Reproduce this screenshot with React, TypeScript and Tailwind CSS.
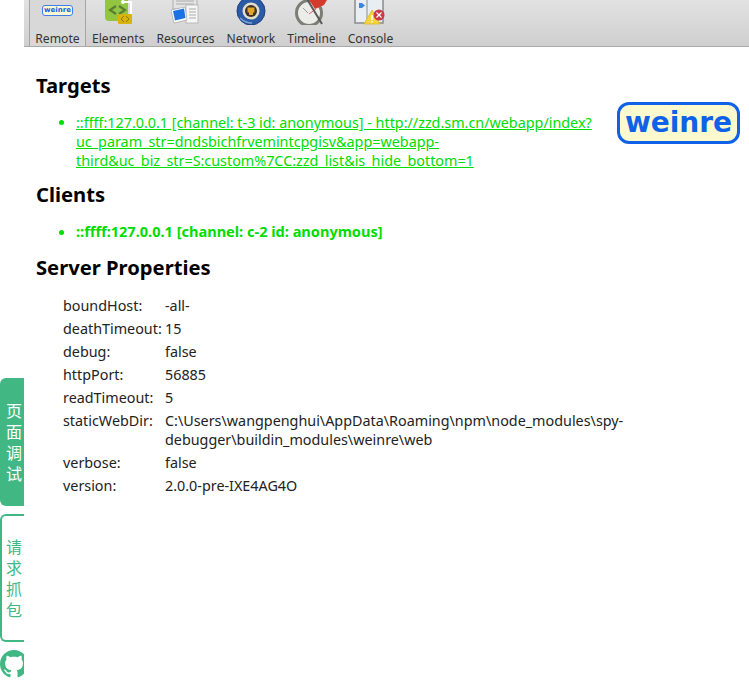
import React from 'react';

const font = { fontFamily: '"Noto Sans", "Noto Sans CJK SC", sans-serif' };
const logoFont = { fontFamily: '"DejaVu Sans", sans-serif' };

function ElementsIcon() {
  return (
    <svg width="28" height="25" viewBox="-1 0 28 25">
      <path d="M0 -3h23v20q0 4-4 4H4q-4 0-4-4z" fill="#93c640" />
      <path d="M11 6 5 10l6 4M14 6l6 4-6 4" stroke="#5c7d34" strokeWidth="2.200" fill="none" />
      <path d="M18 2h8v13" stroke="#fff" strokeWidth="2" fill="none" />
      <circle cx="18" cy="2" r="2" fill="#fff" />
      <rect x="13" y="14" width="14" height="10" rx="1" fill="#d6b30e" />
      <path d="M19 16l-3 3 3 3M21 16l3 3-3 3" stroke="#8f7708" strokeWidth="1" fill="none" />
    </svg>
  );
}

function ResourcesIcon() {
  return (
    <svg width="28" height="25" viewBox="0 0 28 25">
      <rect x="2" y="-3" width="24" height="12" fill="#e4e4e4" stroke="#9a9a9a" strokeWidth="0.700" />
      <path d="M5 1h18M5 4h18" stroke="#aaa" strokeWidth="1" />
      <rect x="15" y="5" width="12" height="18" fill="#f6f6f6" stroke="#a8a8a8" strokeWidth="0.700" />
      <path d="M18 9h7M18 12h7M18 15h7M18 18h7" stroke="#aaa" strokeWidth="1" />
      <path d="M0 10 14 7l2 13-13 3z" fill="#fff" stroke="#888" strokeWidth="0.500" />
      <path d="M2 11l11-2.500 1.500 9.500L4 20.500z" fill="#1a72e4" />
    </svg>
  );
}

function NetworkIcon() {
  return (
    <svg width="30" height="26" viewBox="0 0 30 26">
      <circle cx="15" cy="11" r="14" fill="#2c5ba6" stroke="#1c3d84" strokeWidth="1" />
      <path d="M4 18q5 5 12 5" stroke="#7fa2d6" strokeWidth="1.500" fill="none" />
      <circle cx="15" cy="11" r="8.500" fill="#e3decb" />
      <circle cx="15" cy="11" r="6" fill="#3a3122" />
      <rect x="11.500" y="7.500" width="7" height="5" fill="#e2a62a" />
      <rect x="13" y="12" width="4" height="3" fill="#e2a62a" />
    </svg>
  );
}

function TimelineIcon() {
  return (
    <svg width="34" height="26" viewBox="0 0 34 26">
      <circle cx="15" cy="13" r="12.500" fill="#ecece8" stroke="#7d7d76" strokeWidth="3" />
      <path d="M15 14l7-5" stroke="#e0646c" strokeWidth="1" />
      <path d="M9 8l5 5" stroke="#999" strokeWidth="1" />
      <path d="M13 -1l15 25" stroke="#5a5a5a" strokeWidth="2" />
      <path d="M15 0h18l-3 5-9 4z" fill="#d43a2b" />
    </svg>
  );
}

function ConsoleIcon() {
  return (
    <svg width="32" height="25" viewBox="0 0 32 25">
      <rect x="1" y="-2" width="28" height="25" fill="#e9eef2" stroke="#8b8b8b" strokeWidth="1.500" />
      <path d="M5 3h3l3 2.500-3 2.500H5z" fill="#3f85dc" />
      <path d="M13 -2v25" stroke="#8b8b8b" strokeWidth="1" />
      <path d="M18 10l8 14H10z" fill="#f5d43b" stroke="#dcb72a" strokeWidth="0.800" />
      <path d="M18 15v5M18 21v1.500" stroke="#fff" strokeWidth="1.500" />
      <circle cx="25" cy="15" r="5.500" fill="#c8394a" />
      <path d="M22.500 12.500l5 5M27.500 12.500l-5 5" stroke="#fff" strokeWidth="1.200" />
    </svg>
  );
}

function WeinreBadge({ small }: { small?: boolean }) {
  if (small) {
    return (
      <div
        className="flex items-center justify-center w-[31px] h-[11px] rounded-[3px] border border-[#3d7df0] bg-[#fdf8cf] text-[#1160e6] text-[7px] font-bold leading-none"
        style={logoFont}
      >
        weinre
      </div>
    );
  }
  return (
    <div
      className="flex items-center justify-center w-[123px] h-[42px] rounded-[12px] border-[3px] border-[#0f62e8] bg-[#fdf9cf] text-[#0f62e8] text-[28px] font-bold leading-none"
      style={logoFont}
    >
      weinre
    </div>
  );
}

const tabs = [
  { label: 'Elements', icon: <ElementsIcon /> },
  { label: 'Resources', icon: <ResourcesIcon /> },
  { label: 'Network', icon: <NetworkIcon /> },
  { label: 'Timeline', icon: <TimelineIcon /> },
  { label: 'Console', icon: <ConsoleIcon /> },
];

const props = [
  ['boundHost:', '-all-'],
  ['deathTimeout:', '15'],
  ['debug:', 'false'],
  ['httpPort:', '56885'],
  ['readTimeout:', '5'],
  ['staticWebDir:', 'C:\\Users\\wangpenghui\\AppData\\Roaming\\npm\\node_modules\\spy-debugger\\buildin_modules\\weinre\\web'],
  ['verbose:', 'false'],
  ['version:', '2.0.0-pre-IXE4AG4O'],
];

function Toolbar() {
  return (
    <div className="flex h-[47px] ml-[24px] pl-[5px] border-b border-[#a9a9a9] bg-gradient-to-b from-[#e2e2e2] to-[#cfcfcf] overflow-hidden">
      <div className="flex flex-col items-center w-[57px] border-x border-[#a5a5a5] bg-[#d8d8d8]">
        <div className="h-[31px] pt-[5px]">
          <WeinreBadge small />
        </div>
        <span className="text-[12.200px] leading-[15px] text-[#333]">Remote</span>
      </div>
      <div className="flex gap-[12px] ml-[6px]">
        {tabs.map((t) => (
          <div key={t.label} className="flex flex-col items-center">
            <div className="h-[31px] w-[10px] flex justify-center">
              <div className="shrink-0 h-[25px] overflow-hidden">{t.icon}</div>
            </div>
            <span className="text-[12.100px] leading-[15px] text-[#333]">{t.label}</span>
          </div>
        ))}
      </div>
    </div>
  );
}

function SideTabs() {
  return (
    <div className="absolute left-0 top-[378px] w-[24px] flex flex-col text-[16px] leading-[21px]">
      <div className="h-[128px] pl-[4px] pt-[1px] bg-[#41b883] text-white rounded-l-[6px] flex flex-col items-center justify-center">
        {'页面调试'.split('').map((c) => (
          <span key={c}>{c}</span>
        ))}
      </div>
      <div className="h-[128px] mt-[8px] pl-[2px] pt-[1px] border-2 border-r-0 border-[#41b883] text-[#41b883] rounded-l-[6px] flex flex-col items-center justify-center">
        {'请求抓包'.split('').map((c) => (
          <span key={c}>{c}</span>
        ))}
      </div>
      <div className="w-[24px] h-[30px] mt-[8px] overflow-hidden">
        <svg width="28" height="28" viewBox="0 0 16 16" fill="#41b883">
          <path d="M8 0C3.580 0 0 3.580 0 8c0 3.540 2.290 6.530 5.470 7.590.4.070.55-.17.55-.38 0-.19-.01-.82-.01-1.490-2.010.37-2.530-.49-2.690-.94-.09-.23-.48-.94-.82-1.130-.28-.15-.68-.52-.01-.53.630-.01 1.080.58 1.230.82.720 1.210 1.870.87 2.330.66.070-.52.280-.87.510-1.070-1.780-.2-3.640-.89-3.640-3.950 0-.87.310-1.590.820-2.150-.08-.2-.36-1.020.08-2.120 0 0 .67-.21 2.200.82.640-.18 1.320-.27 2-.27s1.360.09 2 .27c1.530-1.040 2.200-.82 2.200-.82.440 1.100.16 1.920.08 2.120.51.560.82 1.270.82 2.150 0 3.070-1.870 3.750-3.650 3.950.29.250.54.730.54 1.480 0 1.070-.01 1.930-.01 2.200 0 .21.150.46.550.38A8.010 8.010 0 0 0 16 8c0-4.420-3.580-8-8-8z" />
        </svg>
      </div>
    </div>
  );
}

export default function App() {
  return (
    <div className="relative h-[682px] w-[749px] overflow-hidden bg-white text-[14.350px] text-[#222]" style={font}>
      <Toolbar />
      <SideTabs />

      <div className="relative pl-[36px] pr-[8px] pt-[25px]">
        <div className="absolute right-[9px] top-[55px]">
          <WeinreBadge />
        </div>

        <h1 className="text-[20.200px] leading-[27px] font-bold text-black">Targets</h1>
        <ul className="mt-[14px] ml-[24px] w-[532px] list-disc pl-[16px] text-[#00dd00] leading-[19px]">
          <li>
            <a className="underline">
              ::ffff:127.0.0.1 [channel: t-3 id: anonymous] - http://zzd.sm.cn/webapp/index?uc_param_str=dndsbichfrvemintcpgisv&app=webapp-third&uc_biz_str=S:custom%7CC:zzd_list&is_hide_bottom=1
            </a>
          </li>
        </ul>

        <h1 className="text-[20.200px] leading-[27px] font-bold text-black mt-[11px]">Clients</h1>
        <ul className="mt-[14px] ml-[24px] list-disc pl-[16px] text-[#00dd00] text-[14.550px] font-bold leading-[19px]">
          <li>::ffff:127.0.0.1 [channel: c-2 id: anonymous]</li>
        </ul>

        <h1 className="text-[20.200px] leading-[27px] font-bold text-black mt-[13px]">Server Properties</h1>
        <div className="mt-[15px] ml-[27px] w-[570px] grid grid-cols-[102px_1fr] gap-y-[4px] leading-[19px]">
          {props.map(([k, v]) => (
            <React.Fragment key={k}>
              <div>{k}</div>
              <div>{v}</div>
            </React.Fragment>
          ))}
        </div>
      </div>
    </div>
  );
}
